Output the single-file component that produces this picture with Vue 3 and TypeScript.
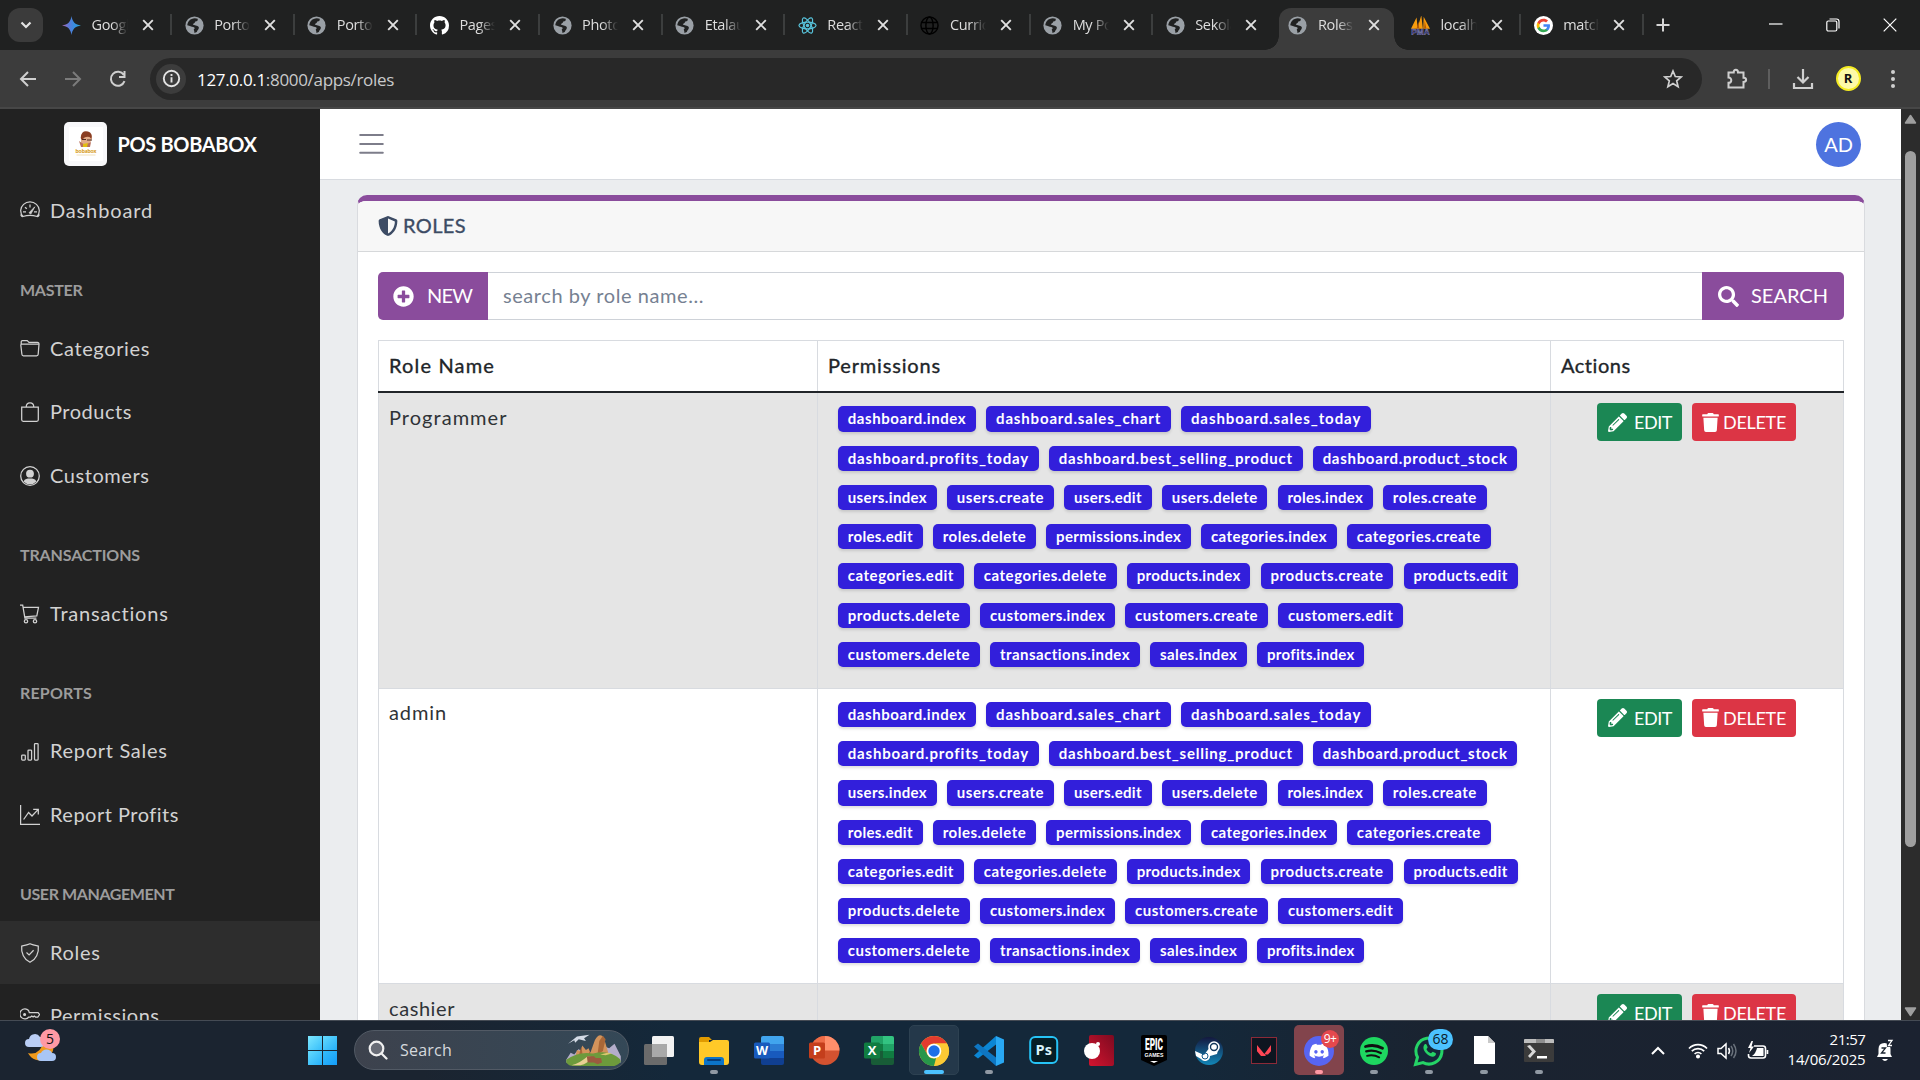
<script setup lang="ts">
interface Tab { icon: string; title: string; active?: boolean; sep?: boolean }
interface NavEntry { title?: boolean; text: string; w: number; icon?: string; active?: boolean }
interface Task { icon: string; run?: boolean; active?: boolean; alert?: boolean; badge?: string; kind?: string }

// Spreads the tracking of a label so that it takes the given advance width.
const vFit = {
  mounted(el: HTMLElement, binding: { value: number }) {
    const count = (el.textContent || '').trim().length
    const natural = el.getBoundingClientRect().width
    if (count) el.style.letterSpacing = ((binding.value - natural) / count).toFixed(3) + 'px'
  },
}

const fav: Record<string, string> = {
  gemini: '<defs><linearGradient id="gm" x1="0" x2="1"><stop offset="0" stop-color="#b06ab3"/><stop offset=".35" stop-color="#5c78d8"/><stop offset=".7" stop-color="#3191e0"/><stop offset="1" stop-color="#3aa6c8"/></linearGradient></defs><path fill="url(#gm)" d="M12 0C13 7.400 16.600 11 24 12 16.600 13 13 16.600 12 24 11 16.600 7.400 13 0 12 7.400 11 11 7.400 12 0z"/>',
  globe: '<circle cx="12" cy="12" r="11.500" fill="#9aa0a6"/><path fill="#202121" d="M12.500 2.800l3.500.7c.6 2.200-.5 3.300-3 3.300-.8 2.500-2.300 2.600-3.200 3.500 1.800 1.700 6 1 7.600 3.700.8 2.700-1.700 3.500-2.500 6.300l-3 1.300c.2-2.600-.9-3.300-.8-4.800 1.700-.6 1.500-2.400-.6-2.800-2.700-.6-4.300-1.800-7.600-2.300C3.300 7 6.500 3 12.500 2.800z"/>',
  github: '<path fill="#fff" transform="scale(1.5)" d="M8 0C3.580 0 0 3.580 0 8c0 3.540 2.290 6.530 5.470 7.590.4.07.55-.17.55-.38 0-.19-.01-.82-.01-1.490-2.010.37-2.530-.49-2.690-.94-.09-.23-.48-.94-.82-1.130-.28-.15-.68-.52-.01-.53.63-.01 1.080.58 1.230.82.72 1.210 1.870.87 2.330.66.07-.52.28-.87.51-1.070-1.780-.2-3.640-.89-3.640-3.950 0-.87.31-1.590.82-2.150-.08-.2-.36-1.020.08-2.120 0 0 .67-.21 2.200.82.64-.18 1.320-.27 2-.27s1.360.09 2 .27c1.530-1.040 2.200-.82 2.200-.82.44 1.100.16 1.920.08 2.120.51.56.82 1.270.82 2.150 0 3.070-1.870 3.750-3.650 3.950.29.25.54.73.54 1.480 0 1.070-.01 1.930-.01 2.200 0 .21.15.46.55.38A8.010 8.010 0 0 0 16 8c0-4.420-3.580-8-8-8z"/>',
  react: '<g fill="none" stroke="#58c4dc" stroke-width="1.500"><ellipse cx="12" cy="12" rx="10.800" ry="4.200"/><ellipse cx="12" cy="12" rx="10.800" ry="4.200" transform="rotate(60 12 12)"/><ellipse cx="12" cy="12" rx="10.800" ry="4.200" transform="rotate(120 12 12)"/></g><circle cx="12" cy="12" r="2.200" fill="#58c4dc"/>',
  world: '<g fill="none" stroke="#000" stroke-width="1.800"><circle cx="12" cy="12" r="10.800"/><ellipse cx="12" cy="12" rx="4.600" ry="10.800"/><path d="M2 8.200h20M2 15.800h20"/></g>',
  pma: '<path fill="#f89c0e" d="M0 16L7 2l1.500 14zM8 16L13 -1l2 17zM15.500 16L16 1l8 15z"/><path fill="#b85b00" d="M7 16l2.500-9 1 9zM16.500 16l.8-10 2.200 10z"/><text x="12" y="24" text-anchor="middle" font-family="Liberation Sans" font-weight="700" font-size="10.500" fill="#25256b" stroke="#9c9cc4" stroke-width=".5">PMA</text>',
  google: '<circle cx="12" cy="12" r="12" fill="#fff"/><g transform="translate(2.600 2.600) scale(.78)"><path fill="#4285F4" d="M22.560 12.250c0-.78-.07-1.530-.2-2.250H12v4.260h5.920c-.26 1.370-1.040 2.530-2.210 3.310v2.770h3.570c2.080-1.920 3.280-4.740 3.280-8.090z"/><path fill="#34A853" d="M12 23c2.970 0 5.460-.98 7.280-2.660l-3.570-2.770c-.98.66-2.230 1.060-3.710 1.060-2.860 0-5.290-1.930-6.160-4.530H2.180v2.840C3.990 20.530 7.700 23 12 23z"/><path fill="#FBBC05" d="M5.840 14.090c-.22-.66-.35-1.360-.35-2.090s.13-1.430.35-2.090V7.070H2.180C1.430 8.550 1 10.220 1 12s.43 3.450 1.180 4.930l3.660-2.840z"/><path fill="#EA4335" d="M12 5.380c1.620 0 3.060.56 4.210 1.640l3.150-3.150C17.450 2.090 14.970 1 12 1 7.700 1 3.990 3.470 2.180 7.070l3.660 2.840c.87-2.600 3.300-4.530 6.160-4.530z"/></g>',
}

const tabs: Tab[] = [
  { icon: 'gemini', title: 'Google', sep: true },
  { icon: 'globe', title: 'Portofolio', sep: true },
  { icon: 'globe', title: 'Portofolio', sep: true },
  { icon: 'github', title: 'Pages', sep: true },
  { icon: 'globe', title: 'Photo', sep: true },
  { icon: 'globe', title: 'Etalaus', sep: true },
  { icon: 'react', title: 'React', sep: true },
  { icon: 'world', title: 'Curric', sep: true },
  { icon: 'globe', title: 'My Po', sep: true },
  { icon: 'globe', title: 'Sekola', sep: false },
  { icon: 'globe', title: 'Roles', active: true },
  { icon: 'pma', title: 'localhost', sep: true },
  { icon: 'google', title: 'match', sep: true },
]

const navIcons: Record<string, string> = {
  dash: '<path d="M3 15.500A9.300 8.800 0 1 1 17 15.500M3 15.500c-.8.300-2-.3-2.200-2M17 15.500c.8.300 2-.3 2.200-2M3 15.500c4.500-1.300 9.500-1.300 14 0M10 3.500v3M3 10.800h3M14 10.800h3M5 6.200l1.800 1.600"/><path d="M9 11.800l5.800-6-4 7.200z" fill="currentColor" stroke-width=".8"/>',
  folder: '<path d="M1.200 5V2.800q0-1.200 1.200-1.200h4.800l1.800 1.800h8.400q1.700 0 1.600 1.700l-.8 10.200q-.1 1.500-1.600 1.500H3.400q-1.400 0-1.500-1.500L.8 6q0-1 1-1h16.500"/>',
  bag: '<path d="M1.700 5.200h16.600v12.600q0 1.500-1.500 1.500H3.200q-1.500 0-1.500-1.500zM6.200 5.200C6.200-.6 13.800-.6 13.800 5.200"/>',
  user: '<circle cx="10" cy="10" r="9.300"/><circle cx="10" cy="7.700" r="3.900" fill="currentColor" stroke="none"/><path d="M3.500 15.500C5 12.800 7 12.600 10 12.600s5 .2 6.500 2.900A9 9 0 0 1 3.500 15.500z" fill="currentColor" stroke="none"/>',
  cart: '<path d="M0 1.200h2.700l2.200 13h11.500M3.300 3.400h15.200l-1.700 8.500-12.200 1"/><circle cx="6" cy="17.200" r="1.700"/><circle cx="15" cy="17.200" r="1.700"/>',
  bars: '<rect x="1.700" y="13" width="3.600" height="5" rx=".8"/><rect x="8" y="8" width="3.600" height="10" rx=".8"/><rect x="14.500" y="1.500" width="3.600" height="16.500" rx=".8"/>',
  trend: '<path d="M.6 0v19.300H20M3.600 14.500l5-7 3.400 3.500L18 4.600M13.200 4.400H18.300v5"/>',
  shield: '<path d="M10 .8C7 2.200 4 2.600 1.700 3 .9 10 4 16.400 10 19.300 16 16.400 19.100 10 18.300 3 16 2.600 13 2.200 10 .8zM6.500 9.500l2.600 2.400 4.500-4.600"/>',
  key: '<circle cx="4.600" cy="8.500" r=".9" fill="currentColor"/><path d="M8.600 4.500h0A5 5 0 1 0 8.800 11h1.700l1.300-1 1.300 1 1.200-1 1.200 1h2.300l1.800-2.500-1.500-2H9.300z"/>',
}
const nav: NavEntry[] = [
  { text: 'Dashboard', w: 103, icon: 'dash' },
  { title: true, text: 'MASTER', w: 62.5 },
  { text: 'Categories', w: 100, icon: 'folder' },
  { text: 'Products', w: 82, icon: 'bag' },
  { text: 'Customers', w: 99.5, icon: 'user' },
  { title: true, text: 'TRANSACTIONS', w: 120 },
  { text: 'Transactions', w: 119, icon: 'cart' },
  { title: true, text: 'REPORTS', w: 72 },
  { text: 'Report Sales', w: 117.5, icon: 'bars' },
  { text: 'Report Profits', w: 128.5, icon: 'trend' },
  { title: true, text: 'USER MANAGEMENT', w: 154.5 },
  { text: 'Roles', w: 50.5, icon: 'shield', active: true },
  { text: 'Permissions', w: 109.5, icon: 'key' },
]

const permissions: [string, number][] = [
  ['dashboard.index', 138], ['dashboard.sales_chart', 184.6], ['dashboard.sales_today', 189.8],
  ['dashboard.profits_today', 200.7], ['dashboard.best_selling_product', 253.6], ['dashboard.product_stock', 204.5],
  ['users.index', 98.8], ['users.create', 106.8], ['users.edit', 87.5], ['users.delete', 105.4], ['roles.index', 95.1], ['roles.create', 103.5],
  ['roles.edit', 84.7], ['roles.delete', 103], ['permissions.index', 144.6], ['categories.index', 135.6], ['categories.create', 143.6],
  ['categories.edit', 125.7], ['categories.delete', 142.7], ['products.index', 123.4], ['products.create', 132.8], ['products.edit', 113.9],
  ['products.delete', 131.9], ['customers.index', 134.7], ['customers.create', 142.7], ['customers.edit', 124.8],
  ['customers.delete', 141.8], ['transactions.index', 149.8], ['sales.index', 96.9], ['profits.index', 106.9],
]
const roles: { name: string; w: number; perms: [string, number][] }[] = [
  { name: 'Programmer', w: 118.5, perms: permissions },
  { name: 'admin', w: 58, perms: permissions },
  { name: 'cashier', w: 66, perms: [] },
]

const apps: Record<string, string> = {
  view: '<rect x="0" y="8" width="23" height="21" rx="1.500" fill="#6b6b6b"/><rect x="8" y="0" width="22" height="21" rx="1.500" fill="#f2f2f2"/><path d="M8 8h15v13H9.500Q8 21 8 19.500z" fill="#a9a9a9"/>',
  files: '<path d="M0 3q0-2 2-2h8l3 3h-3v5H0z" fill="#e19b00"/><path d="M0 6h11l3-2h14q2 0 2 2v20q0 3-3 3H3q-3 0-3-3z" fill="#ffc928"/><path d="M5 29v-5q0-3 3-3h14q3 0 3 3v5z" fill="#0c74c8"/><rect x="8" y="23" width="14" height="2" rx="1" fill="#053e7c"/>',
  word: '<path d="M9 0h19q2 0 2 2v6H7V2q0-2 2-2z" fill="#41a5ee"/><path d="M7 8h23v7H7z" fill="#2b7cd3"/><path d="M7 15h23v7H7z" fill="#185abd"/><path d="M7 22h23v5q0 2-2 2H9q-2 0-2-2z" fill="#103f91"/><rect x="0" y="6.500" width="16" height="16" rx="1.500" fill="#185abd"/><text x="8" y="19" text-anchor="middle" font-family="Open Sans" font-weight="700" font-size="12.500" fill="#fff">W</text>',
  ppt: '<circle cx="16" cy="14.500" r="14.500" fill="#d35230"/><path d="M16 0a14.500 14.500 0 0 0-14.500 14.500H16z" fill="#ed6c47"/><path d="M16 0a14.500 14.500 0 0 1 14.500 14.500H16z" fill="#ff8f6b"/><rect x="0" y="6.500" width="16" height="16" rx="1.500" fill="#c43e1c"/><text x="8" y="19" text-anchor="middle" font-family="Open Sans" font-weight="700" font-size="13" fill="#fff">P</text>',
  excel: '<rect x="7" y="0" width="23" height="29" rx="2" fill="#185c37"/><path d="M7 2q0-2 2-2h10v8H7z" fill="#21a366"/><path d="M19 0h9q2 0 2 2v6H19z" fill="#33c481"/><path d="M7 8h12v7H7z" fill="#107c41"/><path d="M19 8h11v7H19z" fill="#21a366"/><path d="M19 15h11v7H19z" fill="#107c41"/><rect x="0" y="6.500" width="16" height="16" rx="1.500" fill="#107c41"/><text x="8" y="19" text-anchor="middle" font-family="Open Sans" font-weight="700" font-size="13" fill="#fff">X</text>',
  chrome: '<circle cx="15" cy="15" r="15" fill="#fcc934"/><path d="M2 7.500A15 15 0 0 1 28 7.500H15A7.500 7.500 0 0 0 8.500 18.800z" fill="#e33b2e"/><path d="M2 7.500L8.500 18.700A7.500 7.500 0 0 0 17 22.200L15 30A15 15 0 0 1 2 7.500z" fill="#27964a"/><path d="M28 7.500H15A7.500 7.500 0 0 1 21.500 18.700L15 30A15 15 0 0 0 28 7.500z" fill="#fcc934"/><circle cx="15" cy="15" r="7.300" fill="#fff"/><circle cx="15" cy="15" r="5.700" fill="#1f6fe8"/>',
  code: '<path d="M22 0l8 3.500v23L22 30z" fill="#29a8f3"/><path d="M22 0v8.500L4 22.500 0 19.500z" fill="#0b86d4"/><path d="M22 30v-8.500L4 7.500 0 10.500z" fill="#0e76c2"/>',
  ps: '<rect x="1.200" y="1" width="27" height="26" rx="5" fill="#061e26" stroke="#26c3f5" stroke-width="2"/><text x="14.700" y="19" text-anchor="middle" font-family="Open Sans" font-weight="700" font-size="14.500" fill="#d9f3fb">Ps</text>',
  red: '<defs><linearGradient id="rd" x1="1" y1="0" x2="0" y2="1"><stop stop-color="#7d0a20"/><stop offset="1" stop-color="#d3142f"/></linearGradient></defs><rect x="5" y="-1" width="25" height="31" rx="2" fill="url(#rd)"/><circle cx="8" cy="15" r="8" fill="#fff"/><circle cx="14" cy="8" r="2" fill="#fff"/>',
  epic: '<path d="M2 1q0-2 2-2h22q2 0 2 2v23l-13 6-13-6z" fill="#000"/><text x="15" y="14" text-anchor="middle" textLength="18" lengthAdjust="spacingAndGlyphs" font-family="Roboto" font-weight="900" font-size="17" fill="#fff">EPIC</text><text x="15" y="21" text-anchor="middle" font-family="Liberation Sans" font-weight="700" font-size="5.200" fill="#fff">GAMES</text><path d="M11 25h8l-4 2z" fill="#fff"/>',
  steam: '<defs><linearGradient id="st" x2="0" y2="1"><stop stop-color="#14183e"/><stop offset="1" stop-color="#1287b8"/></linearGradient></defs><circle cx="15" cy="15" r="14" fill="url(#st)"/><path d="M1 15l9 4 6-8 4-1 4 4-1 4-7 2a5 5 0 0 1-9 3L2 20z" fill="#fff"/><circle cx="20" cy="11" r="5" fill="#14385c" stroke="#fff" stroke-width="1.600"/><circle cx="20" cy="11" r="2.800" fill="#fff"/><circle cx="11" cy="20" r="3" fill="none" stroke="#14598a"/>',
  valo: '<rect x="2.500" y="1.500" width="25" height="26" fill="#0d1520" stroke="#8c2a38"/><path d="M8 9l9 11h-5L8 15.200zM22 9v6.200L19 18.500h-4z" fill="#ff4655"/>',
  discord: '<circle cx="15" cy="15" r="15" fill="#5865f2"/><path transform="translate(5.600 5.600) scale(.79)" fill="#fff" d="M20.317 4.370a19.800 19.800 0 0 0-4.885-1.515c-.21.375-.49.9-.687 1.287-1.845-.276-3.680-.276-5.487 0-.2-.4-.5-.9-.696-1.287a19.700 19.700 0 0 0-4.885 1.515C.533 9.046-.319 13.580.1 18.058c2.053 1.508 4.041 2.423 6.024 3.086.5-.7.92-1.360 1.310-2.078l-1.914-.914.37-.4c3.928 1.793 8.180 1.793 12.140 0l.37.4-1.914.914c.4.720.81 1.380 1.310 2.078 1.961-.607 3.950-1.522 6.034-3.086.5-5.177-.838-9.674-3.513-13.688zM8.020 15.331c-1.183 0-2.157-1.086-2.157-2.419s.955-2.419 2.157-2.419 2.176 1.095 2.157 2.419c0 1.333-.955 2.419-2.157 2.419zm7.975 0c-1.183 0-2.157-1.086-2.157-2.419s.955-2.419 2.157-2.419 2.176 1.095 2.157 2.419c0 1.333-.946 2.419-2.157 2.419z"/>',
  spotify: '<circle cx="15" cy="15" r="14" fill="#1ed760"/><g fill="none" stroke="#111" stroke-linecap="round"><path d="M6.500 10.500c5.500-1.600 12-1.100 17 1.700" stroke-width="2.800"/><path d="M7.200 15.300c4.800-1.300 10-.8 14.600 1.700" stroke-width="2.300"/><path d="M8 19.800c4.200-1 8.300-.6 12.200 1.500" stroke-width="1.900"/></g>',
  whatsapp: '<path d="M1.500 28.500l2-7.300A13 13 0 1 1 9 26.600z" fill="#14283a" stroke="#25d366" stroke-width="3"/><path d="M10.500 8.500c1-.8 1.800-.5 2.200.5l.9 2.100c.3.800-1.100 1.700-1.100 2.200.8 1.800 2.300 3.200 4.300 4 .7 0 1.600-1.800 2.400-1.400l2.300 1.200c.8.400.5 1.900-.4 2.700-2 1.700-5.300.6-7.900-1.500-2.700-2.300-5.300-6.700-2.700-9.800z" fill="#25d366"/>',
  doc: '<path d="M5 0h14l7 7v21H5z" fill="#fff"/><path d="M19 0v7h7z" fill="#c9c9c9"/>',
  term: '<rect x="0" y="3" width="30" height="23" rx="1" fill="#3b3b3b"/><path d="M0 7V4q0-1 1-1h28q1 0 1 1v3z" fill="#bdbdbd"/><path d="M12 3h9v4h-9z" fill="#8e8e8e"/><path d="M3 10l3-1 6 6.500-6 6.500-2-2 4-4.500z" fill="#d8d8d8"/><path d="M13 20h10v2.500H13z" fill="#fff"/>',
}
const tasks: Task[] = [
  { icon: 'view' }, { icon: 'files', run: true }, { icon: 'word' }, { icon: 'ppt' }, { icon: 'excel' },
  { icon: 'chrome', active: true }, { icon: 'code', run: true }, { icon: 'ps' }, { icon: 'red' }, { icon: 'epic' },
  { icon: 'steam' }, { icon: 'valo' }, { icon: 'discord', run: true, alert: true, badge: '9+', kind: 'red' },
  { icon: 'spotify', run: true }, { icon: 'whatsapp', run: true, badge: '68', kind: 'blue' },
  { icon: 'doc', run: true }, { icon: 'term', run: true },
]
</script>

<template>
  <div class="screen">
    <header class="tabstrip">
      <button class="tabsearch"><svg width="12" height="8" viewBox="0 0 12 8"><path d="M1.500 1.500L6 6l4.500-4.500" fill="none" stroke="#e3e3e3" stroke-width="2.200" /></svg></button>
      <div class="tabs">
        <div v-for="(t, i) in tabs" :key="i" class="tab" :class="{ active: t.active }">
          <svg class="fav" viewBox="0 0 24 24" v-html="fav[t.icon]" />
          <span class="tabtitle">{{ t.title }}</span>
          <svg class="x" width="12" height="12" viewBox="0 0 12 12"><path d="M1.200 1.200l9.600 9.600M10.800 1.200l-9.600 9.600" stroke="#e0e0e0" stroke-width="1.900" /></svg>
          <i v-if="t.sep" class="sep" />
        </div>
      </div>
      <svg class="plus" width="14" height="14" viewBox="0 0 14 14"><path d="M7 .5v13M.5 7h13" stroke="#d5d5d5" stroke-width="2" /></svg>
      <div class="winctl">
        <svg width="14" height="14" viewBox="0 0 14 14"><path d="M0 6h13.500" stroke="#fff" stroke-width="1.200" /></svg>
        <svg width="14" height="14" viewBox="0 0 14 14" fill="none" stroke="#fff" stroke-width="1.200"><rect x=".8" y="3" width="10" height="10" rx="1.500" /><path d="M3.500 1h7q2.500 0 2.500 2.500v7" /></svg>
        <svg width="14" height="14" viewBox="0 0 14 14"><path d="M.7.7l12.600 12.600M13.300.7L.7 13.300" stroke="#fff" stroke-width="1.200" /></svg>
      </div>
    </header>

    <div class="toolbar">
      <div class="navbtns">
        <svg width="18" height="18" viewBox="0 0 18 18" fill="none" stroke="#cfcfcf" stroke-width="2"><path d="M17 9H2.500M9 2L2 9l7 7" /></svg>
        <svg width="18" height="18" viewBox="0 0 18 18" fill="none" stroke="#7b7b7b" stroke-width="2"><path d="M1 9h14.500M9 2l7 7-7 7" /></svg>
        <svg width="18" height="18" viewBox="0 0 18 18" fill="none" stroke="#cfcfcf" stroke-width="2"><path d="M15.500 11.200A7 7 0 1 1 14.800 5M15.500 1v6H10" /></svg>
      </div>
      <div class="omnibox">
        <span class="info"><svg width="19" height="19" viewBox="0 0 19 19"><circle cx="9.500" cy="9.500" r="7.700" fill="none" stroke="#e3e3e3" stroke-width="1.900" /><path d="M9.500 8.300v5.200M9.500 5v1.900" stroke="#e3e3e3" stroke-width="1.900" /></svg></span>
        <span v-fit="197" class="url"><b>127.0.0.1</b>:8000/apps/roles</span>
        <svg class="star" width="20" height="20" viewBox="0 0 20 20"><path d="M10 2l2.300 5.500 5.900.5-4.500 3.900 1.400 5.900-5.100-3.200-5.100 3.200 1.400-5.900L1.800 8l5.900-.5z" fill="none" stroke="#d0d0d0" stroke-width="1.700" /></svg>
      </div>
      <svg class="ext" width="22" height="22" viewBox="0 0 22 22"><path d="M2.500 4.500h5.200C7.700.8 12 .8 12 4.500h5.500v5.200c3.500 0 3.500 4.300 0 4.300v5.500h-15v-4.700c3.700 0 3.700-5.300 0-5.300z" fill="none" stroke="#cfcfcf" stroke-width="2" /></svg>
      <i class="tsep" />
      <svg class="dl" width="22" height="22" viewBox="0 0 22 22"><path d="M11 1v13M5.500 9l5.500 5.500L16.500 9M2 15v5h18v-5" fill="none" stroke="#cfcfcf" stroke-width="2.200" /></svg>
      <span class="profile">R</span>
      <svg class="dots" width="6" height="20" viewBox="0 0 6 20" fill="#cfcfcf"><circle cx="3" cy="3" r="2" /><circle cx="3" cy="10" r="2" /><circle cx="3" cy="17" r="2" /></svg>
    </div>

    <div class="page">
      <aside class="sidebar">
        <div class="brand">
          <span class="logo">
            <svg width="34" height="34" viewBox="0 0 34 34">
              <rect width="34" height="34" fill="#fff" />
              <path d="M12 8q4-4 9-1 3 2 1 7l-2 3q-5 4-8 0z" fill="#e2ab88" />
              <path d="M12 9q1-6 7-4.500 5 1.500 3.500 7.500l-2-2q-5-1-7 3-2.500-1-1.500-4z" fill="#8a3d22" />
              <path d="M13 12.500h4M18 13h5" stroke="#4d2a20" />
              <path d="M10 14l6 4 6-3-1 5h-9z" fill="#b8705c" /><path d="M14 17l5-1-1 4h-4z" fill="#e2bd12" />
              <text x="17" y="26" text-anchor="middle" textLength="21" font-family="Lato" font-weight="900" font-size="5.500" fill="#d79b19">bobabox</text>
              <path d="M7.500 28h19" stroke="#f2e2bd" />
            </svg>
          </span>
          <span v-fit="139" class="brandname">POS BOBABOX</span>
        </div>
        <nav>
          <template v-for="n in nav" :key="n.text">
            <div v-if="n.title" class="navtitle"><span v-fit="n.w">{{ n.text }}</span></div>
            <a v-else class="navitem" :class="{ on: n.active }">
              <svg width="20" height="20" viewBox="0 0 20 20" fill="none" stroke="currentColor" stroke-width="1.250" v-html="navIcons[n.icon as string]" />
              <span v-fit="n.w">{{ n.text }}</span>
            </a>
          </template>
        </nav>
      </aside>

      <main class="main">
        <div class="topbar">
          <svg width="25" height="22" viewBox="0 0 25 22"><path d="M1.200 2h22.600M1.200 11h22.600M1.200 19.800h22.600" stroke="#7d7d8a" stroke-width="2" stroke-linecap="round" /></svg>
          <span class="avatar">AD</span>
        </div>
        <section class="card">
          <h2 class="cardhead">
            <svg width="20" height="20" viewBox="0 0 512 512" fill="currentColor"><path d="M466.500 83.700l-192-80a48.150 48.150 0 0 0-36.900 0l-192 80C27.700 91.100 16 108.600 16 128c0 198.500 114.500 335.700 221.500 380.300 11.800 4.900 25.100 4.900 36.900 0C360.100 472.600 496 349.300 496 128c0-19.400-11.700-36.900-29.500-44.300zM256.100 446.300l-.1-381 175.900 73.300c-3.300 151.400-82.100 261.100-175.800 307.700z" /></svg>
            <span v-fit="63">ROLES</span>
          </h2>
          <div class="cardbody">
            <div class="searchrow">
              <button class="btn new">
                <svg width="21" height="21" viewBox="0 0 512 512" fill="#fff"><path d="M256 8C119 8 8 119 8 256s111 248 248 248 248-111 248-248S393 8 256 8zm144 276c0 6.600-5.400 12-12 12h-92v92c0 6.600-5.400 12-12 12h-56c-6.600 0-12-5.400-12-12v-92h-92c-6.600 0-12-5.400-12-12v-56c0-6.600 5.400-12 12-12h92v-92c0-6.600 5.400-12 12-12h56c6.600 0 12 5.400 12 12v92h92c6.600 0 12 5.400 12 12v56z" /></svg>
                <span v-fit="45">NEW</span>
              </button>
              <div class="field"><span v-fit="201">search by role name...</span></div>
              <button class="btn search">
                <svg width="21" height="21" viewBox="0 0 512 512" fill="#fff"><path d="M505 442.700L405.300 343c-4.500-4.500-10.600-7-17-7H372c27.600-35.300 44-79.700 44-128C416 93.100 322.900 0 208 0S0 93.100 0 208s93.100 208 208 208c48.300 0 92.700-16.400 128-44v16.300c0 6.400 2.500 12.500 7 17l99.700 99.700c9.400 9.400 24.600 9.400 33.900 0l28.300-28.300c9.400-9.400 9.400-24.600.1-34zM208 336c-70.700 0-128-57.200-128-128 0-70.700 57.200-128 128-128 70.700 0 128 57.200 128 128 0 70.700-57.200 128-128 128z" /></svg>
                <span v-fit="77">SEARCH</span>
              </button>
            </div>
            <div class="table">
              <div class="row head">
                <div class="cell"><span v-fit="106">Role Name</span></div>
                <div class="cell"><span v-fit="113">Permissions</span></div>
                <div class="cell"><span v-fit="70">Actions</span></div>
              </div>
              <div v-for="(r, i) in roles" :key="r.name" class="row body" :class="{ striped: i % 2 === 0 }">
                <div class="cell name"><span v-fit="r.w">{{ r.name }}</span></div>
                <div class="cell perms">
                  <span v-for="p in r.perms" :key="p[0]" class="badge" :style="{ width: p[1] + 'px' }"><span v-fit="p[1] - 19.5">{{ p[0] }}</span></span>
                </div>
                <div class="cell actions">
                  <button class="act edit">
                    <svg width="19" height="19" viewBox="0 0 512 512" fill="#fff"><path d="M497.900 142.100l-46.100 46.100c-4.700 4.700-12.300 4.700-17 0l-111-111c-4.700-4.700-4.700-12.300 0-17l46.100-46.100c18.700-18.700 49.100-18.700 67.900 0l60.100 60.100c18.800 18.700 18.800 49.100 0 67.900zM284.200 99.800L21.600 362.400.4 483.900c-2.900 16.400 11.400 30.600 27.800 27.800l121.500-21.300 262.600-262.600c4.700-4.700 4.700-12.300 0-17l-111-111c-4.800-4.700-12.400-4.700-17.100 0zM124.100 339.900c-5.500-5.500-5.500-14.300 0-19.800l154-154c5.500-5.500 14.300-5.500 19.800 0s5.500 14.300 0 19.800l-154 154c-5.500 5.500-14.300 5.500-19.800 0zM88 424h48v36.300l-64.500 11.300-31.100-31.100L51.700 376H88v48z" /></svg>
                    <span v-fit="38">EDIT</span>
                  </button>
                  <button class="act delete">
                    <svg width="17" height="19" viewBox="0 0 448 512" fill="#fff"><path d="M432 32H312l-9.400-18.700A24 24 0 0 0 281.100 0H166.800a23.720 23.720 0 0 0-21.400 13.300L136 32H16A16 16 0 0 0 0 48v32a16 16 0 0 0 16 16h416a16 16 0 0 0 16-16V48a16 16 0 0 0-16-16zM53.200 467a48 48 0 0 0 47.900 45h245.800a48 48 0 0 0 47.900-45L416 128H32z" /></svg>
                    <span v-fit="63">DELETE</span>
                  </button>
                </div>
              </div>
            </div>
          </div>
        </section>
      </main>

      <div class="scrollbar">
        <svg width="13" height="11" viewBox="0 0 13 11"><path d="M6.500 1.500L11.500 9h-10z" fill="#9f9f9f" stroke="#9f9f9f" stroke-width="1.500" stroke-linejoin="round" /></svg>
        <i class="thumb" />
        <svg class="down" width="13" height="11" viewBox="0 0 13 11"><path d="M6.500 9.500L1.500 2h10z" fill="#9f9f9f" stroke="#9f9f9f" stroke-width="1.500" stroke-linejoin="round" /></svg>
      </div>
    </div>

    <footer class="taskbar">
      <div class="weather">
        <svg width="32" height="34" viewBox="0 0 32 34">
          <path d="M27 12a12 12 0 1 1-24 12q12 3 16-12z" fill="#f09a1c" />
          <path d="M4 18a4 4 0 0 1 0-8 6 6 0 0 1 11-2 5 5 0 0 1 1 10z" fill="#b9cdf5" />
          <path d="M16 32a4 4 0 0 1 0-8 6 6 0 0 1 11 0 4 4 0 0 1 0 8z" fill="#a9c6f5" />
        </svg>
        <span class="wbadge">5</span>
      </div>
      <div class="start"><i /><i /><i /><i /></div>
      <div class="tsearch">
        <svg width="20" height="20" viewBox="0 0 20 20" fill="none" stroke="#f0f0f0" stroke-width="2.200"><circle cx="8.500" cy="8.500" r="6.800" fill="#686c76" /><path d="M13.500 13.500l5 5" stroke-linecap="round" /></svg>
        <span v-fit="52">Search</span>
        <svg class="scene" width="61" height="38" viewBox="0 0 61 38">
          <path d="M0 30l5-8 4 2 5-6 8 8 18-12 8 3 6-5 7 14v7H0z" fill="#b4adca" />
          <path d="M9 31l3-12 4 1 2-6 4 5 3-2 2 5 5-14q5-9 10-3l5 17 3 9z" fill="#d2935b" />
          <path d="M37 9l4-6 3 4-3 13-6 4zM17 15l2 14h-6zM26 20l2 8h-4z" fill="#a96737" />
          <path d="M0 30q14-10 30-7 18-5 30 6l1 3q-4 5-10 5H8q-5 0-8-4z" fill="#6d9a3c" />
          <path d="M6 36q9-2 18-10l6 1q-6 7-14 9z" fill="#e9cf93" />
          <path d="M23 26h8l2 2h6l1 5-5 2-4-2h-7z" fill="#9b5b3f" />
          <path d="M38 24l8-2 5 1-7 2z" fill="#dcc76f" />
          <path d="M2 12l10-8 14-2-6 4 2 3-8-2-4 4-1-3z" fill="#d4dbe6" />
        </svg>
      </div>
      <div class="apps">
        <div v-for="t in tasks" :key="t.icon" class="app" :class="{ active: t.active, alert: t.alert }">
          <svg width="30" height="30" viewBox="0 0 30 30" overflow="visible" v-html="apps[t.icon]" />
          <i v-if="t.run || t.active" class="mark" />
          <span v-if="t.badge" class="count" :class="t.kind">{{ t.badge }}</span>
        </div>
      </div>
      <div class="tray">
        <svg width="14" height="9" viewBox="0 0 14 9"><path d="M1 8l6-6 6 6" fill="none" stroke="#fff" stroke-width="2" /></svg>
        <svg class="wifi" width="20" height="17" viewBox="0 0 20 17" fill="none" stroke="#fff" stroke-width="1.700"><path d="M1 6.500a12.500 12.500 0 0 1 18 0M3.800 9.200a8.800 8.800 0 0 1 12.400 0M6.600 12a4.900 4.900 0 0 1 6.800 0" /><circle cx="10" cy="14.500" r="1.200" fill="#fff" /></svg>
        <svg class="vol" width="20" height="18" viewBox="0 0 20 18" fill="none" stroke="#fff" stroke-width="1.500"><path d="M1 6.500h3L9 2v14l-5-4.500H1zM11.500 6q2 3 0 6" /><path d="M14 4q3.500 5 0 10M16.500 2q5 7 0 14" stroke="#69717b" /></svg>
        <svg class="bat" width="22" height="20" viewBox="0 0 22 20" fill="none" stroke="#fff" stroke-width="1.600"><path d="M7 5h9q2.500 0 2.500 2.500v7q0 2.500-2.500 2.500H4q-2.500 0-2.500-2.500V13M20.500 9v4" /><path d="M10 7h6.500v8H5q4-3 5-8z" fill="#fff" stroke="none" /><path d="M4.500 0L1 7h2.500L2 12l5-6.500H4.500L6 0z" fill="#fff" stroke="none" /></svg>
        <div class="clock"><span v-fit="36">21:57</span><span v-fit="78">14/06/2025</span></div>
        <svg class="bell" width="18" height="24" viewBox="0 0 18 24"><path d="M1 18l1.500-3v-5q0-6 6-6 6 0 6 6v5l1.500 3zM6 20h6q-3 4-6 0z" fill="#fff" /><path d="M5.500 9h4l-4 5h4" fill="none" stroke="#1b2430" stroke-width="1.300" /><path d="M10.500 0H18v8h-7z" fill="#1b2230" /><path d="M12 1.500h4L12.500 6.500H16" fill="none" stroke="#fff" stroke-width="1.300" /></svg>
      </div>
    </footer>
  </div>
</template>

<style>
html, body { margin: 0; overflow: hidden; background: #202121; }
</style>

<style scoped>
* { box-sizing: border-box; }
button { border: 0; padding: 0; margin: 0; font: inherit; }
svg { display: block; flex: none; }
.screen { width: 1920px; height: 1080px; display: flex; flex-direction: column; overflow: hidden; font-family: "Lato", "Open Sans", sans-serif; font-size: 20px; white-space: nowrap; }

.tabstrip { height: 50px; flex: none; background: #202121; display: flex; align-items: center; padding-left: 8px; font-family: "Open Sans", "Noto Sans", sans-serif; }
.tabsearch { width: 35px; height: 34px; border-radius: 12px; background: #3b3b3b; display: flex; align-items: center; justify-content: center; }
.tabs { display: flex; height: 50px; margin-left: 6.500px; width: 1594.300px; }
.tab { flex: 1; position: relative; display: flex; align-items: center; padding-left: 12.500px; }
.tab.active::before { content: ""; position: absolute; left: 3px; width: 115px; top: 8px; bottom: 0; background: #3c3c3c; border-radius: 12px 12px 0 0; }
.tab.active::after { content: ""; position: absolute; left: -11px; width: 143px; bottom: 0; height: 14px; background: radial-gradient(circle at 0 0, transparent 13.500px, #3c3c3c 14px) left / 14px 14px no-repeat, radial-gradient(circle at 100% 0, transparent 13.500px, #3c3c3c 14px) right / 14px 14px no-repeat; }
.fav, .tabtitle, .x { position: relative; }
.fav { width: 19px; height: 19px; }
.tabtitle { margin-left: 10.500px; width: 36px; overflow: hidden; font-size: 14.500px; letter-spacing: -.35px; line-height: 22px; margin-top: -1px; color: #dedede; -webkit-mask-image: linear-gradient(90deg, #000 55%, transparent 100%); mask-image: linear-gradient(90deg, #000 55%, transparent 100%); }
.x { margin-left: 14px; }
.sep { position: absolute; right: 0; top: 14px; width: 2px; height: 21px; background: #3c3e3e; }
.plus { margin-left: 12.500px; }
.winctl { display: flex; gap: 43px; margin-left: 99px; margin-top: -1px; }

.toolbar { height: 59px; flex: none; background: #3c3c3c; border-bottom: 2px solid #474747; display: flex; align-items: center; position: relative; }
.navbtns { display: flex; gap: 27px; margin-left: 18.500px; width: 131.500px; }
.omnibox { width: 1552px; height: 42px; border-radius: 21px; background: #282828; display: flex; align-items: center; padding-left: 6px; }
.info { width: 30px; height: 30px; border-radius: 50%; background: #3c3c3c; display: flex; align-items: center; justify-content: center; }
.url { margin-left: 11px; margin-top: 1px; font: 17px "Open Sans", sans-serif; color: #c9cacb; }
.url b { font-weight: 400; color: #fff; }
.star { margin-left: auto; margin-right: 19.500px; }
.ext { margin-left: 23.500px; }
.tsep { width: 2px; height: 20px; margin-left: 20.500px; background: #5e5e5e; }
.dl { margin-left: 21.500px; }
.profile { width: 25px; height: 25px; margin-left: 22px; border-radius: 50%; border: 2px solid #f5ec22; background: #fdf9a8; color: #111; font: 700 13px/21px "Open Sans", sans-serif; text-align: center; }
.dots { margin-left: 29px; }

.page { flex: none; height: 911px; display: flex; overflow: hidden; background: #ebedef; }
.sidebar { width: 320px; background: #222; color: #d2d2d2; overflow: hidden; }
.brand { height: 70px; display: flex; align-items: center; padding-left: 64px; }
.logo { width: 43px; height: 44px; border-radius: 5px; background: #f8f8fa; display: flex; align-items: center; justify-content: center; }
.brandname { margin-left: 10.500px; color: #fff; font-weight: 700; margin-top: -1px; }
.navitem { height: 63.4px; display: flex; align-items: center; gap: 10px; padding-left: 20px; }
.navitem svg { margin-top: 1px; }
.navitem span { margin-top: -1.500px; }
.navitem.on { background: #2d2d2d; }
.navtitle { height: 74.5px; padding: 36px 0 0 20px; font-size: 16px; line-height: 24px; font-weight: 700; color: #9c9c9c; }

.main { width: 1581px; overflow: hidden; }
.topbar { height: 71px; background: #fff; border-bottom: 1px solid #d8dbe0; display: flex; align-items: center; justify-content: space-between; padding: 0 40px 0 39px; }
.avatar { width: 45px; height: 45px; border-radius: 50%; background: #4e73df; color: #fff; line-height: 44px; text-align: center; }
.card { margin: 15px 36px 0 37px; border: 1px solid #d9dbdf; border-top: 6px solid #8a4c9c; border-radius: 10px 10px 0 0; background: #fff; height: 900px; overflow: hidden; }
.cardhead { margin: 0; height: 51px; background: #f7f7f7; border-bottom: 1px solid #d6d8da; display: flex; align-items: center; gap: 5px; padding-left: 20px; color: #3c4b64; font-size: 20px; font-weight: 400; -webkit-text-stroke: .35px; }
.cardhead span { margin-top: -2px; }
.cardbody { padding: 20px; }
.searchrow { display: flex; height: 48px; }
.btn { background: #8a4c9c; color: #fff; display: flex; align-items: center; gap: 13px; padding-left: 15px; }
.btn span { margin-top: -2px; }
.new { width: 110px; border-radius: 5px 0 0 5px; }
.search { width: 142px; border-radius: 0 5px 5px 0; gap: 12px; padding-left: 16px; }
.field { flex: 1; border: 1px solid #ced2d8; border-width: 1px 0; color: #768192; padding-left: 15px; line-height: 44px; }
.table { margin-top: 20px; border: 1px solid #d8dbe0; color: #212529; }
.row { display: grid; grid-template-columns: 439px 733px 1fr; }
.head { height: 52px; border-bottom: 2px solid #212529; -webkit-text-stroke: .35px; margin: 0 -1px; padding: 0 1px; }
.head .cell { line-height: 48px; }
.cell { padding-left: 10px; border-right: 1px solid #d8dbe0; }
.cell:last-child { border-right: 0; }
.body { height: 295.6px; border-bottom: 1px solid #d8dbe0; }
.striped { background: #e5e5e5; }
.name { padding-top: 8.500px; line-height: 30px; color: #2f3337; }
.perms { display: flex; flex-wrap: wrap; align-content: flex-start; gap: 14px 10.300px; padding: 13.300px 14px 0 20px; }
.badge { height: 25.300px; border-radius: 5px; background: #321fdb; color: #fff; font-size: 15px; font-weight: 700; line-height: 25px; text-align: center; box-shadow: 0 2px 3px rgba(0, 0, 0, .13); }
.actions { display: flex; align-items: flex-start; gap: 10px; padding: 10px 0 0 46px; }
.act { height: 38px; border-radius: 4px; color: #fff; display: flex; align-items: center; font-size: 18px; }
.edit { width: 85px; background: #1b8754; gap: 7px; padding-left: 11px; }
.delete { width: 104px; background: #dc3545; gap: 4px; padding-left: 10px; }

.scrollbar { width: 19px; background: #2c2c2c; display: flex; flex-direction: column; align-items: center; padding: 5px 0 3px; }
.thumb { width: 11px; height: 696px; border-radius: 6px; background: #9f9f9f; margin-top: 26px; }
.down { margin-top: auto; }

.taskbar { height: 60px; flex: none; border-top: 1px solid #454b54; background: linear-gradient(90deg, #1b2430 0, #1b2430 22%, #14283a 35%, #14283a 62%, #1a2330 75%, #1b2230 100%); display: flex; font-family: "Open Sans", sans-serif; color: #fff; }
.weather { position: relative; width: 308px; padding: 8px 0 0 25px; }
.wbadge { position: absolute; left: 40px; top: 8px; width: 20px; height: 20px; border-radius: 50%; background: #ff99a4; color: #111; font-size: 14px; line-height: 20px; text-align: center; }
.start { width: 29px; height: 29px; margin-top: 15px; display: grid; grid-template-columns: 14px 14px; grid-template-rows: 14px 14px; gap: 1px; }
.start i { background: linear-gradient(135deg, #7ee8ff, #35bdfa); }
.start i:last-child { background: linear-gradient(135deg, #35bdfa, #149cf8); }
.start i:nth-child(3), .start i:nth-child(2) { background: linear-gradient(135deg, #64dafd, #25aff9); }
.tsearch { width: 275px; height: 40px; margin: 9px 0 0 17px; border-radius: 20px; border: 1px solid #525a65; background: linear-gradient(90deg, #3d424d, #344857); display: flex; align-items: center; padding-left: 13px; color: #d5d9dd; font-size: 16px; }
.tsearch span { margin-left: 12px; }
.scene { margin-left: auto; margin-right: 4px; width: 61px; height: 34px; }
.apps { display: flex; margin-left: 2.500px; }
.app { position: relative; width: 50px; height: 50px; margin: 4px 2.500px 0; padding: 11px 0 0 10px; border-radius: 5px; }
.app.active { background: #24384a; border: 1px solid #2d4151; padding: 10px 0 0 9px; }
.app.alert { background: #82444c; }
.mark { position: absolute; left: 21px; bottom: 1px; width: 8px; height: 4px; border-radius: 2px; background: #9099a3; }
.active .mark { left: 14px; width: 20px; bottom: 0; background: #4cc2ff; }
.alert .mark { background: #ff99a4; }
.count { position: absolute; border-radius: 12px; text-align: center; }
.count.red { right: 5px; top: 5px; width: 18px; height: 18px; background: #e5484d; font-size: 12px; line-height: 17px; letter-spacing: -.5px; }
.count.blue { right: 1px; top: 4px; width: 25px; height: 21px; background: #4cc2ff; color: #0b1c2a; font-size: 14px; line-height: 20px; }
.tray { display: flex; align-items: center; height: 59px; margin-left: 84px; width: 268px; }
.wifi { margin-left: 23px; }
.vol { margin-left: 9px; }
.bat { margin-left: 10px; }
.clock { width: 97px; margin-top: -3px; display: flex; flex-direction: column; align-items: flex-end; font-size: 15px; line-height: 20px; }
.bell { margin-left: 10px; }
</style>
